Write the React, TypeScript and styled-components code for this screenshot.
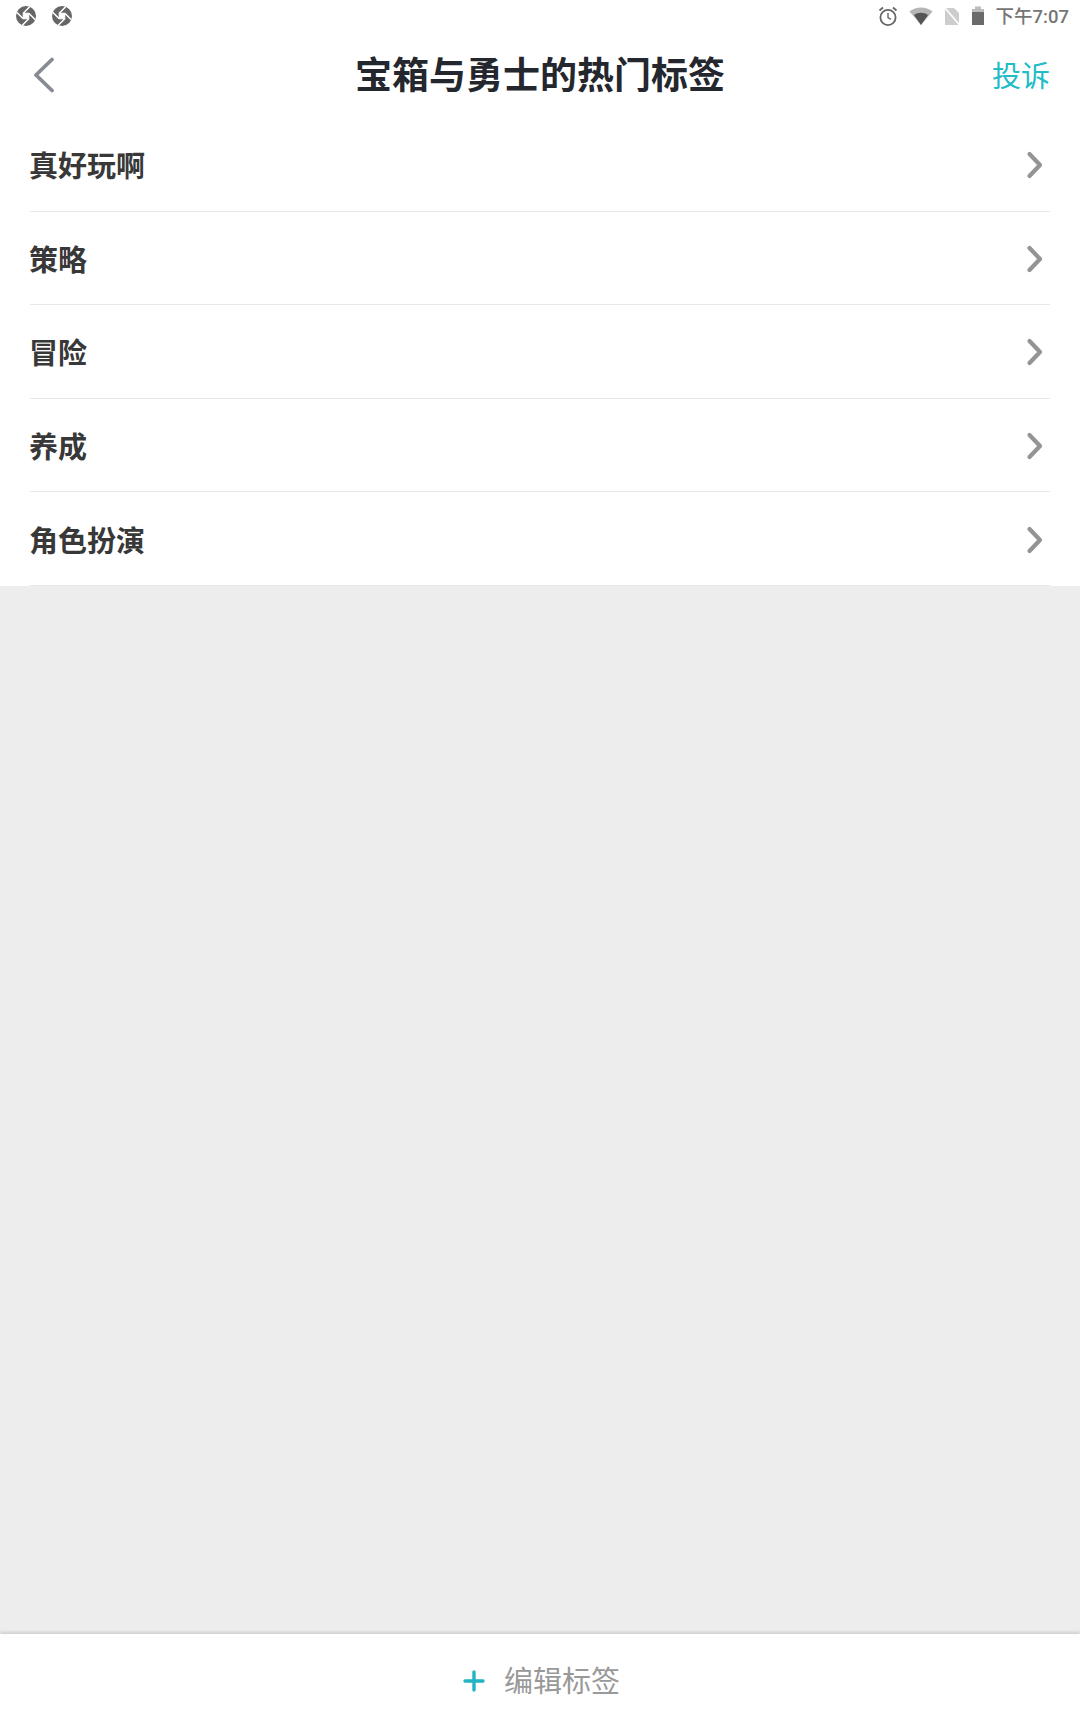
import React from "react";
import styled, { createGlobalStyle } from "styled-components";

const Global = createGlobalStyle`
  html, body { margin: 0; padding: 0; background: #ededed; }
  body { font-family: "Noto Sans CJK SC", "Liberation Sans", sans-serif; }
  #root { width: 1080px; height: 1728px; }
`;

const Page = styled.div`
  width: 1080px;
  height: 1728px;
  display: flex;
  flex-direction: column;
  background: #ededed;
  overflow: hidden;
`;

const Top = styled.div`
  background: #fff;
  height: 586px;
  flex: none;
`;

const StatusBar = styled.div`
  height: 32px;
  padding: 0 11px 0 16px;
  display: flex;
  align-items: center;
  justify-content: space-between;
`;

const StatusGroup = styled.div<{ $gap: number }>`
  display: flex;
  align-items: center;
  gap: ${(p) => p.$gap}px;
`;

const Clock = styled.span`
  font-family: "Roboto", "Noto Sans CJK SC", sans-serif;
  font-size: 18.5px;
  font-weight: 500;
  color: #757575;
  line-height: 32px;
  margin-top: 2px;
`;

const Header = styled.header`
  height: 86px;
  padding: 0 30px 0 32px;
  display: flex;
  align-items: center;
  position: relative;
  justify-content: space-between;
`;

const Title = styled.h1`
  position: absolute;
  left: 0;
  right: 0;
  margin: 0;
  top: 11px;
  text-align: center;
  font-size: 37px;
  line-height: 60px;
  font-weight: 700;
  color: #24272e;
`;

const BackButton = styled.div`
  display: flex;
`;

const Report = styled.span`
  font-size: 29px;
  line-height: 60px;
  color: #22bcc6;
  margin-top: -3px;
`;

const List = styled.ul`
  margin: 0;
  padding: 0 30px;
  list-style: none;
`;

const Row = styled.li`
  height: 92.6px;
  box-sizing: content-box;
  border-bottom: 1px solid #e8e8e8;
  display: flex;
  align-items: center;
  justify-content: space-between;
`;

const RowLabel = styled.span`
  font-size: 29px;
  font-weight: 700;
  color: #383838;
  margin-left: -1px;
`;

const RowArrow = styled.span`
  display: flex;
  margin: 2px 6px 0 0;
`;

const Spacer = styled.div`
  flex: 1;
`;

const Footer = styled.footer`
  height: 94px;
  background: #fff;
  box-shadow: 0 -2px 3px rgba(0, 0, 0, 0.13);
  display: flex;
  align-items: center;
  justify-content: center;
  gap: 19px;
  padding-left: 3px;
`;

const FooterLabel = styled.span`
  font-size: 29px;
  color: #999;
  line-height: 40px;
  margin-top: -4px;
`;

const Aperture = () => (
  <svg width="20" height="20" viewBox="0 0 20 20">
    <circle cx="10" cy="10" r="10" fill="#666" />
    <path d="M7.2 7.2 12.8 7.2 12.8 12.8 7.2 12.8Z" fill="#fff" stroke="#fff" strokeWidth="1" />
    <path d="M7.2 7.2 13.7 0.7M12.8 7.2 19.3 13.7M12.8 12.8 6.3 19.3M7.2 12.8 0.7 6.3" stroke="#fff" strokeWidth="1.5" />
  </svg>
);

const Alarm = () => (
  <svg width="20" height="20" viewBox="0 0 20 20" fill="none" stroke="#666" strokeWidth="1.8">
    <circle cx="10" cy="11.5" r="7.6" />
    <path d="M10 7v4.6l3 1.7" strokeWidth="1.4" />
    <path d="M1.5 4.5 5 1.5M18.5 4.5 15 1.5" />
  </svg>
);

const Wifi = () => (
  <svg width="24" height="20" viewBox="0 0 24 20">
    <path d="M0.5 5.5C7 0 17 0 23.5 5.5L12 19Z" fill="#b5b5b5" />
    <path d="M5 9C9 6 15 6 19 9L12 19Z" fill="#555" />
  </svg>
);

const NoSim = () => (
  <svg width="16" height="20" viewBox="0 0 16 20">
    <path d="M1 2h9l5 5v12H1Z" fill="#cdcdcd" />
    <path d="M1 2 15.5 19" stroke="#fff" strokeWidth="1.6" />
  </svg>
);

const Battery = () => (
  <svg width="14" height="20" viewBox="0 0 14 20">
    <rect x="4" y="0.5" width="6" height="3" fill="#bbb" />
    <rect x="1" y="3" width="12" height="3" fill="#bbb" />
    <rect x="1" y="6" width="12" height="13" fill="#6a6a6a" />
  </svg>
);

const Chevron = () => (
  <svg width="18" height="28" viewBox="0 0 18 28" fill="none" stroke="#949494" strokeWidth="4.2" strokeLinecap="round" strokeLinejoin="round">
    <path d="M3.5 3 14 14 3.5 25" />
  </svg>
);

const Back = () => (
  <svg width="24" height="36" viewBox="0 0 24 36" fill="none" stroke="#878b94" strokeWidth="3.8" strokeLinecap="round" strokeLinejoin="round">
    <path d="M20 2.5 4 18l16 15.5" />
  </svg>
);

const Plus = () => (
  <svg width="22" height="22" viewBox="0 0 22 22" stroke="#22b4c4" strokeWidth="3.4" strokeLinecap="round">
    <path d="M11 2v18M2 11h18" />
  </svg>
);

const tags = ["真好玩啊", "策略", "冒险", "养成", "角色扮演"];

export default function App() {
  return (
    <Page>
      <Global />
      <Top>
        <StatusBar>
          <StatusGroup $gap={16}>
            <Aperture />
            <Aperture />
          </StatusGroup>
          <StatusGroup $gap={11}>
            <Alarm />
            <Wifi />
            <NoSim />
            <Battery />
            <Clock>下午7:07</Clock>
          </StatusGroup>
        </StatusBar>
        <Header>
          <BackButton>
            <Back />
          </BackButton>
          <Title>宝箱与勇士的热门标签</Title>
          <Report>投诉</Report>
        </Header>
        <List>
          {tags.map((t) => (
            <Row key={t}>
              <RowLabel>{t}</RowLabel>
              <RowArrow>
                <Chevron />
              </RowArrow>
            </Row>
          ))}
        </List>
      </Top>
      <Spacer />
      <Footer>
        <Plus />
        <FooterLabel>编辑标签</FooterLabel>
      </Footer>
    </Page>
  );
}
